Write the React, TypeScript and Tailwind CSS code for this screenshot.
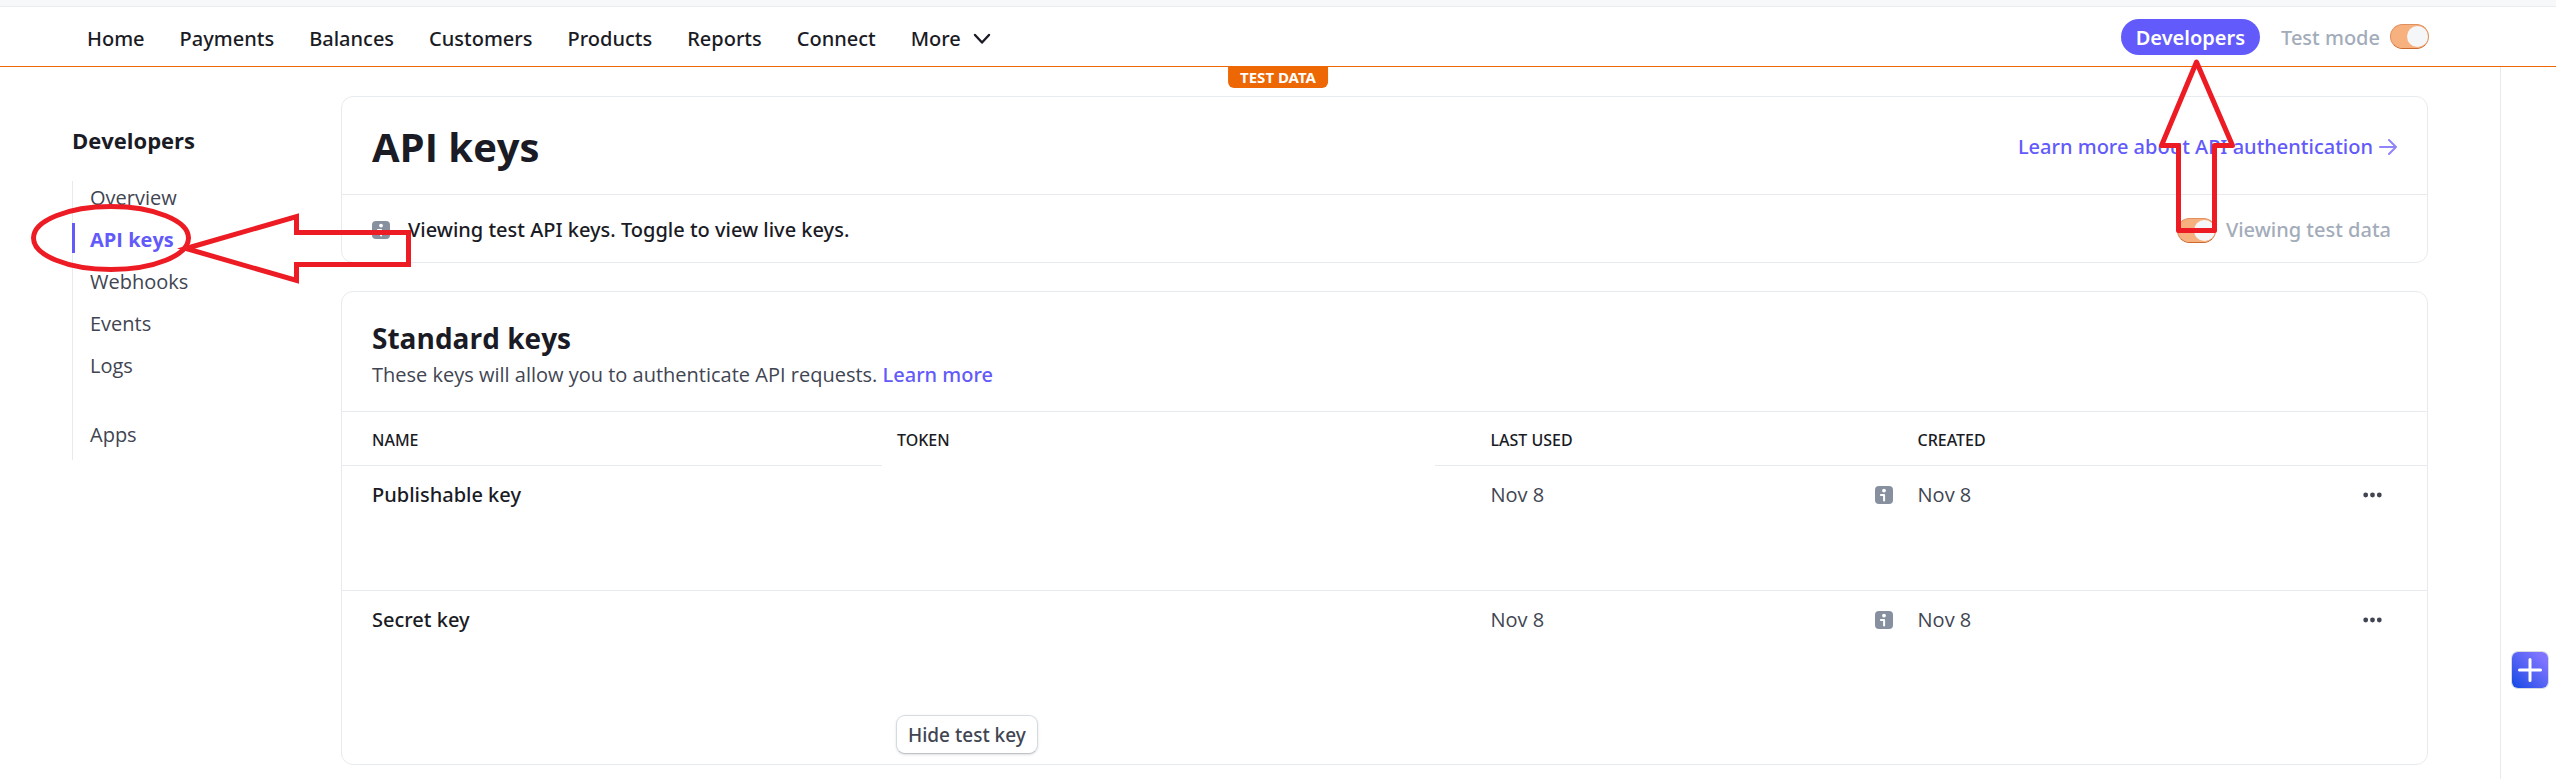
const NAV = ["Home", "Payments", "Balances", "Customers", "Products", "Reports", "Connect"];
const SIDE = ["Overview", "API keys", "Webhooks", "Events", "Logs"];
const KEYS = [
  { name: "Publishable key", lastUsed: "Nov 8", created: "Nov 8", hideable: false },
  { name: "Secret key", lastUsed: "Nov 8", created: "Nov 8", hideable: true },
];

function InfoIcon() {
  return (
    <svg width="18" height="18" viewBox="0 0 18 18" className="shrink-0" aria-hidden="true">
      <rect width="18" height="18" rx="4" fill="#87909f" />
      <circle cx="9" cy="4.6" r="1.9" fill="#fff" />
      <path d="M5.9 8.9H9.1V14.4" fill="none" stroke="#fff" strokeWidth="2" strokeLinecap="round" strokeLinejoin="round" />
    </svg>
  );
}

function Toggle({ id }: { id: string }) {
  return (
    <span className="relative inline-flex h-[25px] w-[39px] shrink-0">
      <input
        id={id}
        type="checkbox"
        defaultChecked
        className="h-[25px] w-[39px] appearance-none rounded-full border border-[#e0905f] border-b-[#c9682f] bg-[#f6b17f]"
      />
      <span className="pointer-events-none absolute top-[2px] right-[1px] size-[21px] rounded-full bg-[#f5f6f8]" />
    </span>
  );
}

function Header() {
  return (
    <header className="border-b border-[#ed6704]">
      <div className="h-[7px] border-b border-[#e9edf1] bg-[#f6f8fa]" />
      <div className="flex h-[59px] items-center justify-between pr-[127px] pl-[87px]">
        <nav className="flex items-center gap-[35px] pt-1 font-['Noto_Sans'] text-xl text-[#1a1b25]">
          {NAV.map((item) => (
            <a key={item} href="#" className="font-medium">
              {item}
            </a>
          ))}
          <button type="button" className="flex items-center gap-3 font-medium">
            More
            <svg width="18" height="12" viewBox="0 0 18 12" fill="none" stroke="#1a1b25" strokeWidth="2.4" strokeLinecap="round" strokeLinejoin="round" aria-hidden="true">
              <path d="M2 2L9 9.5L16 2" />
            </svg>
          </button>
        </nav>
        <div className="flex items-center text-xl">
          <a href="#" className="mr-[21px] flex h-9 items-center rounded-full bg-[#625afa] px-[15px] pt-0.5 font-['Noto_Sans'] font-semibold text-white">
            Developers
          </a>
          <label htmlFor="test-mode" className="mr-[10px] pt-0.5 font-['Noto_Sans'] font-medium text-[#a3acba]">
            Test mode
          </label>
          <Toggle id="test-mode" />
        </div>
      </div>
    </header>
  );
}

function Sidebar() {
  return (
    <aside className="w-[341px] shrink-0 pt-[58px] pl-[72px]">
      <h2 className="text-[22px] leading-[30px] font-bold text-[#1a1b25]">Developers</h2>
      <ul className="mt-[26px] flex flex-col gap-3 border-l border-[#e7ebef] pb-3 text-xl leading-[26px] text-[#414552]">
        {SIDE.map((item) =>
          item === "API keys" ? (
            <li key={item} className="-ml-px border-l-3 border-[#625afa] pt-1 pl-[15px]">
              <a href="#" className="font-bold text-[#625afa]">
                {item}
              </a>
            </li>
          ) : (
            <li key={item} className="pt-1 pl-[17px]">
              <a href="#">{item}</a>
            </li>
          ),
        )}
        <li className="mt-[27px] pt-1 pl-[17px]">
          <a href="#">Apps</a>
        </li>
      </ul>
    </aside>
  );
}

function KeyTable() {
  return (
    <table className="w-full table-fixed border-collapse text-left text-xl">
      <colgroup>
        <col className="w-[25.9%]" />
        <col className="w-[26.5%]" />
        <col className="w-[22.4%]" />
        <col />
      </colgroup>
      <thead>
        <tr className="h-[54px] border-t border-[#e7ebef] font-['Noto_Sans'] text-base text-[#1a1b25] uppercase">
          <th scope="col" className="border-b border-[#e7ebef] pt-0.5 pl-[30px] font-medium">Name</th>
          <th scope="col" className="pt-0.5 pl-[15px] font-medium">Token</th>
          <th scope="col" className="border-b border-[#e7ebef] pt-0.5 pl-14 font-medium">Last used</th>
          <th scope="col" className="border-b border-[#e7ebef] pt-0.5 pl-4 font-medium">Created</th>
        </tr>
      </thead>
      <tbody className="align-top leading-[30px] text-[#414552]">
        {KEYS.map((k, i) => (
          <tr key={k.name} className={i === 0 ? "h-[125px]" : "h-[173px] border-t border-[#e7ebef]"}>
            <td className="pt-[14px] pl-[30px] font-['Noto_Sans'] font-medium text-[#1a1b25]">{k.name}</td>
            <td className="pb-[10px] pl-[14px] align-bottom">
              {k.hideable && (
                <button
                  type="button"
                  className="block h-[39px] rounded-[9px] border border-[#d5dbe1] border-b-[#bfc3c9] bg-white px-[11px] pt-0.5 font-['Noto_Sans'] text-[19px] font-medium text-[#414552] shadow-sm"
                >
                  Hide test key
                </button>
              )}
            </td>
            <td className="pt-[14px] pr-[9px] pl-14">
              <span className="flex items-center justify-between">
                {k.lastUsed}
                <InfoIcon />
              </span>
            </td>
            <td className="pt-[14px] pr-[45px] pl-4">
              <span className="flex items-center justify-between">
                {k.created}
                <button type="button" aria-label={`Actions for ${k.name}`}>
                  <svg width="19" height="6" viewBox="0 0 19 6" fill="#414552" aria-hidden="true">
                    <circle cx="2.7" cy="3" r="2.4" />
                    <circle cx="9.5" cy="3" r="2.4" />
                    <circle cx="16.3" cy="3" r="2.4" />
                  </svg>
                </button>
              </span>
            </td>
          </tr>
        ))}
      </tbody>
    </table>
  );
}

function Main() {
  return (
    <main className="flex min-w-0 flex-1 flex-col gap-7 pt-[29px] pb-[14px]">
      <section className="rounded-xl border border-[#e7ebef]">
        <div className="flex h-[98px] items-center justify-between border-b border-[#e7ebef] px-[30px] pt-0.5">
          <h1 className="text-[40px] leading-[54px] font-bold text-[#1a1b25]">API keys</h1>
          <a href="#" className="flex items-center gap-[6px] font-['Noto_Sans'] text-xl font-medium text-[#625afa]">
            Learn more about API authentication
            <svg width="18" height="16" viewBox="0 0 18 16" fill="none" stroke="#9084fa" strokeWidth="2" strokeLinecap="round" strokeLinejoin="round" aria-hidden="true">
              <path d="M1 8H17M10 1L17 8L10 15" />
            </svg>
          </a>
        </div>
        <div className="flex h-[67px] items-center justify-between pt-[3px] pr-[36px] pl-[30px]">
          <p className="flex items-center gap-[18px] font-['Noto_Sans'] text-xl font-medium text-[#1a1b25]">
            <InfoIcon />
            Viewing test API keys. Toggle to view live keys.
          </p>
          <div className="flex items-center gap-[10px] text-xl">
            <Toggle id="test-data" />
            <label htmlFor="test-data" className="font-['Noto_Sans'] font-medium text-[#a3acba]">
              Viewing test data
            </label>
          </div>
        </div>
      </section>

      <section className="rounded-xl border border-[#e7ebef]">
        <div className="h-[119px] px-[30px] pt-[26px]">
          <h2 className="text-[28px] leading-10 font-bold text-[#1a1b25]">Standard keys</h2>
          <p className="text-xl leading-[34px] text-[#414552]">
            These keys will allow you to authenticate API requests.{" "}
            <a href="#" className="font-['Noto_Sans'] font-medium text-[#625afa]">
              Learn more
            </a>
          </p>
        </div>
        <KeyTable />
      </section>
    </main>
  );
}

function Annotations() {
  return (
    <>
      <svg className="pointer-events-none absolute top-[190px] left-[20px]" width="410" height="110" viewBox="20 190 410 110" fill="none" stroke="#ed1c24" strokeWidth="5" aria-hidden="true">
        <ellipse cx="111" cy="238" rx="77.5" ry="31.5" />
        <path d="M186 248.5L296.5 216.5V232.5H408.5V264.5H296.5V280.5Z" />
      </svg>
      <svg className="pointer-events-none absolute top-[50px] right-[316px]" width="90" height="190" viewBox="2150 50 90 190" fill="none" stroke="#ed1c24" strokeWidth="5" aria-hidden="true">
        <path d="M2196.5 62L2161.5 145.5H2178.5V230.5H2214.5V145.5H2232.5Z" strokeLinejoin="round" />
      </svg>
    </>
  );
}

export default function App() {
  return (
    <div className="relative flex min-h-screen flex-col bg-white font-['Open_Sans','Noto_Sans',sans-serif]">
      <Header />
      <div className="relative flex flex-1">
        <span className="absolute top-0 left-1/2 -translate-x-1/2 rounded-b-md bg-[#ed6704] px-3 font-['Noto_Sans'] text-[15px] leading-[21px] font-bold text-white">
          TEST DATA
        </span>
        <Sidebar />
        <Main />
        <div className="ml-[72px] flex w-14 shrink-0 flex-col items-end justify-end border-l border-[#e7ebef] pr-2 pb-[91px]">
          <button
            type="button"
            aria-label="Add"
            className="flex size-9 items-center justify-center rounded-md bg-linear-to-tr from-[#0048e5] to-[#7f74ff] to-85% ring-1 ring-[#d5dbe1]"
          >
            <svg width="24" height="24" viewBox="0 0 24 24" stroke="#fff" strokeWidth="3" strokeLinecap="round" aria-hidden="true">
              <path d="M12 1.5V22.5M1.5 12H22.5" />
            </svg>
          </button>
        </div>
      </div>
      <Annotations />
    </div>
  );
}
